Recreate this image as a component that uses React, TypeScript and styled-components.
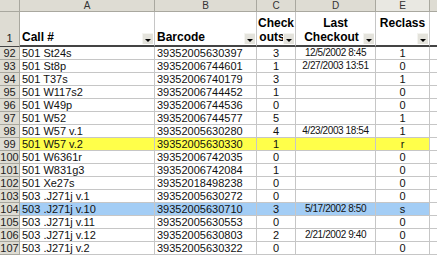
import { FC } from "react";
import styled, { createGlobalStyle } from "styled-components";

const GlobalStyle = createGlobalStyle`
  html, body {
    margin: 0;
    padding: 0;
    background: #ffffff;
    overflow: hidden;
  }
  body {
    font-family: "Liberation Sans", Arial, sans-serif;
  }
`;

const gridLine = "#c6c6c6";
const headBg = "#dedcd3";

const Sheet = styled.div`
  display: grid;
  grid-template-columns: 20px 135px 102px 39px 80px 54px 1fr;
  grid-template-rows: 12px 35px;
  grid-auto-rows: 13px;
  width: 437px;
  height: 255px;
  overflow: hidden;
`;

const ColHead = styled.div<{ $alt?: boolean }>`
  box-sizing: border-box;
  background: ${(p) => (p.$alt ? "#e9e8e2" : headBg)};
  border-right: 1px solid #a9a89f;
  border-bottom: 1px solid #a9a89f;
  font-size: 10px;
  color: #333;
  display: flex;
  align-items: center;
  justify-content: center;
  line-height: 1;
`;

const RowHead = styled.div<{ $tall?: boolean }>`
  box-sizing: border-box;
  background: ${headBg};
  border-right: 1px solid #a9a89f;
  border-bottom: 1px solid ${(p) => (p.$tall ? "#444" : "#a9a89f")};
  font-size: 11px;
  color: #222;
  display: flex;
  align-items: ${(p) => (p.$tall ? "flex-end" : "center")};
  justify-content: center;
  padding-bottom: ${(p) => (p.$tall ? "2px" : "0")};
  line-height: 1;
`;

const HeadCell = styled.div<{ $align?: string; $valign?: string }>`
  position: relative;
  box-sizing: border-box;
  background: #fff;
  border-right: 1px solid ${gridLine};
  border-bottom: 2px solid #444;
  font-size: 12px;
  font-weight: bold;
  color: #000;
  line-height: 14px;
  display: flex;
  flex-direction: column;
  justify-content: ${(p) => p.$valign || "flex-end"};
  align-items: ${(p) => p.$align || "flex-start"};
  text-align: ${(p) => (p.$align === "center" ? "center" : "left")};
  padding: 4px 2px 1px 2px;
`;

const Drop = styled.span`
  position: absolute;
  right: 1px;
  bottom: 1px;
  width: 11px;
  height: 11px;
  background: #e4e3dc;
  border-top: 1px solid #f4f4f0;
  border-left: 1px solid #f4f4f0;
  box-sizing: border-box;
  display: flex;
  align-items: center;
  justify-content: center;
  &::after {
    content: "";
    border-left: 3px solid transparent;
    border-right: 3px solid transparent;
    border-top: 3px solid #000;
    margin-top: 2px;
  }
`;

const Cell = styled.div<{ $center?: boolean; $bg?: string; $narrow?: boolean }>`
  box-sizing: border-box;
  background: ${(p) => p.$bg || "#fff"};
  border-right: 1px solid ${gridLine};
  border-bottom: 1px solid ${gridLine};
  font-size: ${(p) => (p.$narrow ? "10px" : "11px")};
  letter-spacing: ${(p) => (p.$narrow ? "-0.4px" : "0")};
  color: #111;
  line-height: 12px;
  white-space: nowrap;
  overflow: hidden;
  padding: 0 2px;
  text-align: ${(p) => (p.$center ? "center" : "left")};
`;

const Filler = styled.div`
  box-sizing: border-box;
  background: #fff;
  border-bottom: 1px solid ${gridLine};
`;

const FillerHead = styled.div<{ $bottom?: string }>`
  box-sizing: border-box;
  background: ${headBg};
  border-bottom: 1px solid ${(p) => p.$bottom || "#a9a89f"};
`;

const FillerTop = styled.div`
  box-sizing: border-box;
  background: #fff;
  border-bottom: 2px solid #444;
`;

const Shift = styled.span`
  padding-right: 8px;
`;

type Row = [number, string, string, string, string, string, string?];

const rows: Row[] = [
  [92, "501 St24s", "39352005630397", "3", "12/5/2002 8:45", "1"],
  [93, "501 St8p", "39352006744601", "1", "2/27/2003 13:51", "0"],
  [94, "501 T37s", "39352006740179", "3", "", "1"],
  [95, "501 W117s2", "39352006744452", "1", "", "0"],
  [96, "501 W49p", "39352006744536", "0", "", "0"],
  [97, "501 W52", "39352006744577", "5", "", "1"],
  [98, "501 W57 v.1", "39352005630280", "4", "4/23/2003 18:54", "1"],
  [99, "501 W57 v.2", "39352005630330", "1", "", "r", "#ffff4a"],
  [100, "501 W6361r", "39352006742035", "0", "", "0"],
  [101, "501 W831g3", "39352006742084", "1", "", "0"],
  [102, "501 Xe27s", "39352018498238", "0", "", "0"],
  [103, "503 .J271j v.1", "39352005630272", "0", "", "0"],
  [104, "503 .J271j v.10", "39352005630710", "3", "5/17/2002 8:50", "s", "#a3cdf5"],
  [105, "503 .J271j v.11", "39352005630553", "0", "", "0"],
  [106, "503 .J271j v.12", "39352005630803", "2", "2/21/2002 9:40", "0"],
  [107, "503 .J271j v.2", "39352005630322", "0", "", "0"],
];

const Row: FC<{ n: number; cells: string[]; bg?: string }> = ({ n, cells, bg }) => (
  <>
    <RowHead>{n}</RowHead>
    <Cell $bg={bg}>{cells[0]}</Cell>
    <Cell $bg={bg}>{cells[1]}</Cell>
    <Cell $bg={bg} $center>{cells[2]}</Cell>
    <Cell $bg={bg} $center $narrow>{cells[3]}</Cell>
    <Cell $bg={bg} $center>{cells[4]}</Cell>
    <Filler />
  </>
);

const App: FC = () => {
  return (
    <>
      <GlobalStyle />
      <Sheet>
        <ColHead />
        <ColHead>A</ColHead>
        <ColHead>B</ColHead>
        <ColHead>C</ColHead>
        <ColHead>D</ColHead>
        <ColHead $alt>E</ColHead>
        <FillerHead />

        <RowHead $tall>1</RowHead>
        <HeadCell>
          Call #
          <Drop />
        </HeadCell>
        <HeadCell>
          Barcode
          <Drop />
        </HeadCell>
        <HeadCell $align="center">
          <span>Check</span>
          <Shift>outs</Shift>
          <Drop />
        </HeadCell>
        <HeadCell $align="center">
          <span>Last</span>
          <Shift>Checkout</Shift>
          <Drop />
        </HeadCell>
        <HeadCell $align="center" $valign="flex-start">
          Reclass
          <Drop />
        </HeadCell>
        <FillerTop />

        {rows.map(([n, call, code, outs, last, recl, bg]) => (
          <Row key={n} n={n} cells={[call, code, outs, last, recl]} bg={bg} />
        ))}
      </Sheet>
    </>
  );
};

export default App;
